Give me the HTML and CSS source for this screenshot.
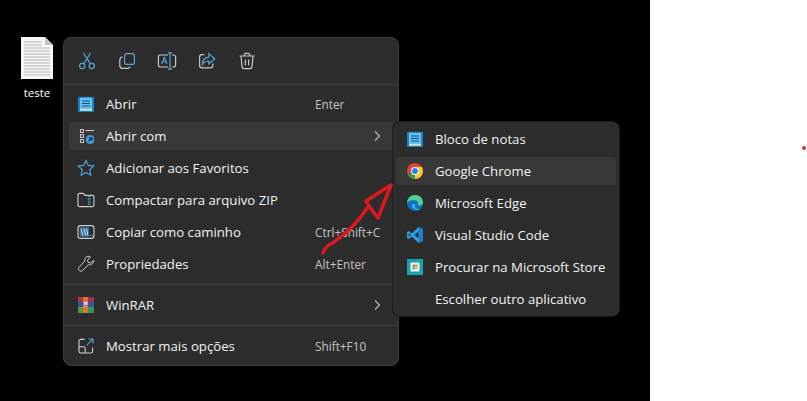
FILE: index.html
```html
<!DOCTYPE html>
<html>

<head>
    <meta charset="UTF-8">
    <title>Abrir com</title>
    <link rel="stylesheet" href="styles.css">
</head>

<body>
    <svg class="defs" width="0" height="0">
        <symbol id="notepad" viewBox="0 0 16 16">
            <rect x="0" y="1" width="16" height="15" fill="#1a80c6" />
            <rect x="2" y="1" width="12" height="14" fill="#62c0f2" />
            <rect x="2" y="13" width="12" height="1.4" fill="#f3e0a0" />
            <path d="M3 0v2M5 0v2M7 0v2M9 0v2M11 0v2M13 0v2" stroke="#14507e" stroke-width="1" />
            <path d="M4 5h8M4 7.5h8M4 10h8" stroke="#14507e" stroke-width="1" />
        </symbol>
    </svg>

    <div class="desktop">
        <!-- file on the desktop -->
        <div class="file">
            <svg width="32" height="42" viewBox="0 0 32 42">
                <path d="M0 0h24l8 8v34H0z" fill="#f7f7f7" />
                <path d="M24 0l8 8h-8z" fill="#c4c4c4" />
                <path d="M3 5h18M3 8h18M3 11h26M3 14h26M3 17h26M3 20h26M3 23h26M3 26h26M3 29h26M3 32h26M3 35h26M3 38h26"
                    stroke="#b5b5b5" stroke-width="1" />
            </svg>
            <span class="file-name">teste</span>
        </div>

        <!-- main context menu -->
        <div class="menu main-menu">
            <div class="toolbar">
                <div class="tool">
                    <svg width="18" height="18" viewBox="0 0 18 18" fill="none" stroke="#55a6d6" stroke-width="1.2">
                        <circle cx="4.2" cy="14" r="2.6" />
                        <circle cx="13.8" cy="14" r="2.6" />
                        <path d="M5.6 11.8L12.6 1M12.4 11.8L5.4 1" />
                    </svg>
                </div>
                <div class="tool">
                    <svg width="18" height="18" viewBox="0 0 18 18" fill="none" stroke-width="1.2">
                        <rect x="6.6" y="1.6" width="9.8" height="10.8" rx="2.2" stroke="#55a6d6" />
                        <path d="M4.4 4.8C2.6 5.4 1.8 6.4 1.8 8v5.4c0 2 1.2 3 3 3h4.6c1.4 0 2.4-.7 2.9-1.9" stroke="#c6c6c6" />
                    </svg>
                </div>
                <div class="tool">
                    <svg width="20" height="18" viewBox="0 0 20 18" fill="none" stroke-width="1.2">
                        <path d="M11 3H3.5C2.2 3 1.4 3.8 1.4 5v8c0 1.2.8 2 2.1 2H11" stroke="#c6c6c6" />
                        <path d="M15 3h1.500c1.300 0 2.100.8 2.100 2v8c0 1.200-.8 2-2.100 2H15" stroke="#c6c6c6" />
                        <path d="M11 .8h4M11 17.200h4M13 .8v16.400" stroke="#55a6d6" />
                        <path d="M4.600 12L7.400 5.600 10 12M5.600 10h3.600" stroke="#55a6d6" />
                    </svg>
                </div>
                <div class="tool">
                    <svg width="18" height="18" viewBox="0 0 18 18" fill="none" stroke-width="1.2">
                        <path d="M6.400 2.600H4C2.500 2.600 1.600 3.500 1.600 5v8.400c0 1.500.9 2.400 2.400 2.400h8.400c1.500 0 2.400-.9 2.400-2.400v-2" stroke="#c6c6c6" />
                        <path d="M10.800 1.600l6 5.200-6 5.200V9c-3 0-5 1.100-6.400 3.400 0-4.400 2.400-6.800 6.400-7.200z" stroke="#55a6d6" />
                    </svg>
                </div>
                <div class="tool">
                    <svg width="18" height="18" viewBox="0 0 18 18" fill="none" stroke="#c6c6c6" stroke-width="1.2">
                        <path d="M1.600 4h14.800M6.400 4V2.800c0-.9.5-1.400 1.400-1.400h2.400c.9 0 1.400.5 1.400 1.400V4" />
                        <path d="M3 4l1 10.600c.1 1.300.9 2 2.200 2h5.600c1.300 0 2.100-.7 2.200-2L15 4" />
                        <path d="M7.400 7.600v5.600M10.600 7.600v5.600" />
                    </svg>
                </div>
            </div>
            <div class="sep"></div>
            <div class="group group-first">
                <div class="row">
                    <span class="icon"><svg width="16" height="16"><use href="#notepad" /></svg></span>
                    <span class="label">Abrir</span>
                    <span class="keys">Enter</span>
                </div>
                <div class="row row-hover">
                    <span class="icon">
                        <svg width="16" height="16" viewBox="0 0 16 16" fill="none">
                            <path d="M2.500 1.500h3v3h-3zM2.500 6.500h3v3h-3zM2.500 11.500h3v3h-3z" stroke="#d0d0d0" stroke-width="1" />
                            <path d="M7.500 2.500h8.500" stroke="#d0d0d0" stroke-width="1" />
                            <circle cx="12.200" cy="11.500" r="4.500" fill="#3a9ee0" />
                            <path d="M10.500 13.200l3.200-3.200M11 9.800h2.900v2.900" stroke="#14202a" stroke-width="1.100" />
                        </svg>
                    </span>
                    <span class="label">Abrir com</span>
                    <svg class="chevron" width="8" height="12" viewBox="0 0 8 12" fill="none" stroke="#bdbdbd" stroke-width="1.1">
                        <path d="M2 1.500L6.500 6 2 10.500" />
                    </svg>
                </div>
                <div class="row">
                    <span class="icon">
                        <svg width="18" height="18" viewBox="0 0 18 18" fill="none" stroke="#4da3d4" stroke-width="1.2">
                            <path d="M9 1.400l2.300 5 5.400.6-4 3.700 1.100 5.400L9 13.400l-4.800 2.700 1.100-5.400-4-3.700 5.400-.6z" />
                        </svg>
                    </span>
                    <span class="label">Adicionar aos Favoritos</span>
                </div>
                <div class="row">
                    <span class="icon">
                        <svg width="18" height="16" viewBox="0 0 18 16" fill="none" stroke-width="1.1">
                            <path d="M1 13V3c0-1 .6-1.600 1.600-1.600h3.600l1.800 2h7.400c1 0 1.600.6 1.600 1.600v8c0 1-.6 1.600-1.600 1.600H2.600C1.600 14.600 1 14 1 13z" stroke="#d0d0d0" />
                            <path d="M11.400 3.600v10.800M13 3.600v10.800" stroke="#4da3d4" stroke-dasharray="1.6 1" />
                        </svg>
                    </span>
                    <span class="label">Compactar para arquivo ZIP</span>
                </div>
                <div class="row">
                    <span class="icon">
                        <svg width="18" height="16" viewBox="0 0 18 16" fill="none">
                            <rect x="1" y="1.600" width="16" height="12.800" rx="2.400" stroke="#d0d0d0" stroke-width="1.1" />
                            <rect x="2.600" y="3.200" width="9.400" height="9.600" rx="1" fill="#2f6f9c" />
                            <path d="M4.200 4.600l1.600 7M7 4.600l1.600 7M9.600 4.600l1.200 7" stroke="#cfe6f5" stroke-width="1" />
                            <path d="M13 11.600h.9M15 11.600h.9" stroke="#d0d0d0" stroke-width="1" />
                        </svg>
                    </span>
                    <span class="label">Copiar como caminho</span>
                    <span class="keys">Ctrl+Shift+C</span>
                </div>
                <div class="row">
                    <span class="icon">
                        <svg width="18" height="18" viewBox="0 0 18 18" fill="none" stroke="#cfcfcf" stroke-width="1">
                            <path d="M12 1.200c-2.700 0-4.800 2.300-4.300 5L1.900 12.400c-1.900 2 1.500 5.200 3.500 3.300l6-6c2.800.7 5.500-1.400 5.400-4.400l-3.100 2.700-2.600-.6-.6-2.400 3-2.800c-.5-.3-1-.5-1.500-.5z" />
                        </svg>
                    </span>
                    <span class="label">Propriedades</span>
                    <span class="keys">Alt+Enter</span>
                </div>
            </div>
            <div class="sep"></div>
            <div class="group">
                <div class="row">
                    <span class="icon">
                        <svg width="16" height="16" viewBox="0 0 16 16">
                            <rect y="0" width="5" height="5" fill="#b0304a" />
                            <rect x="5" y="0" width="5" height="5" fill="#d9772a" />
                            <rect x="10" y="0" width="6" height="5" fill="#a62a52" />
                            <rect y="5" width="5" height="5" fill="#3a4fa8" />
                            <rect x="5" y="5" width="5" height="5" fill="#f0ece4" />
                            <rect x="10" y="5" width="6" height="5" fill="#3553b0" />
                            <rect y="10" width="5" height="6" fill="#4f9a3a" />
                            <rect x="5" y="10" width="5" height="6" fill="#d9772a" />
                            <rect x="10" y="10" width="6" height="6" fill="#2f9a58" />
                            <path d="M6 5.400v3.400h4V5.400" fill="none" stroke="#b0304a" stroke-width="1.2" />
                        </svg>
                    </span>
                    <span class="label">WinRAR</span>
                    <svg class="chevron" width="8" height="12" viewBox="0 0 8 12" fill="none" stroke="#bdbdbd" stroke-width="1.1">
                        <path d="M2 1.500L6.500 6 2 10.500" />
                    </svg>
                </div>
            </div>
            <div class="sep"></div>
            <div class="group">
                <div class="row">
                    <span class="icon">
                        <svg width="16" height="16" viewBox="0 0 16 16" fill="none" stroke-width="1.1">
                            <path d="M6.600 1.400H2.800C1.600 1.400 1 2 1 3.200v10c0 1.200.6 1.800 1.800 1.800h10c1.200 0 1.800-.6 1.800-1.800V9.400" stroke="#d0d0d0" />
                            <path d="M1 8.800h4.600c1 0 1.600.6 1.600 1.600V15" stroke="#d0d0d0" />
                            <path d="M8.600 7.400L15 1M10.400 1H15v4.600" stroke="#4da3d4" />
                        </svg>
                    </span>
                    <span class="label">Mostrar mais opções</span>
                    <span class="keys">Shift+F10</span>
                </div>
            </div>
        </div>

        <!-- submenu -->
        <div class="menu sub-menu">
            <div class="row">
                <span class="icon"><svg width="16" height="16"><use href="#notepad" /></svg></span>
                <span class="label">Bloco de notas</span>
            </div>
            <div class="row row-hover">
                <span class="icon">
                    <svg width="16" height="16" viewBox="0 0 16 16">
                        <circle cx="8" cy="8" r="8" fill="#de4437" />
                        <path d="M8 8L1.100 12A8 8 0 0 0 8 16c.5 0 1 0 1.400-.1L12 8z" fill="#2f9e4f" />
                        <path d="M8 4h6.900A8 8 0 0 1 8 16z" fill="#fbc52d" />
                        <circle cx="8" cy="8" r="4" fill="#fff" />
                        <circle cx="8" cy="8" r="3" fill="#2f80ed" />
                    </svg>
                </span>
                <span class="label">Google Chrome</span>
            </div>
            <div class="row">
                <span class="icon">
                    <svg width="16" height="16" viewBox="0 0 16 16">
                        <circle cx="8" cy="8" r="8" fill="#0f6fc4" />
                        <path d="M0 7.400C.6 3 4 0 8 0c4.400 0 8 3 8 7.600 0 1.800-1.400 2.800-3 2.800-1.200 0-2-.4-2.200-1 1-1.800-.6-4.200-3.400-4.200C4.800 5.200 1.800 5.400 0 7.400z" fill="#4fd08e" />
                        <path d="M5 10c0 2.600 2.400 5 5.200 5 1.600 0 3.200-.7 4-1.800-1.600.9-3 1-4.400.6C8 13.200 8 11 8 9.400 6.800 8.600 5 8.800 5 10z" fill="#2fb6e8" />
                    </svg>
                </span>
                <span class="label">Microsoft Edge</span>
            </div>
            <div class="row">
                <span class="icon">
                    <svg width="16" height="16" viewBox="0 0 16 16">
                        <path d="M11.600 0L16 2v12l-4.400 2L4.800 9.600 1.800 12 0 11V5l1.800-1 3 2.400z" fill="#2f9fe4" />
                        <path d="M11.600 4.600L7.400 8l4.200 3.400zM1.800 6v4l2-2z" fill="#1e2a36" />
                        <path d="M11.600 0L16 2v12l-4.400 2z" fill="#1a7fcb" />
                    </svg>
                </span>
                <span class="label">Visual Studio Code</span>
            </div>
            <div class="row">
                <span class="icon">
                    <svg width="16" height="16" viewBox="0 0 16 16">
                        <rect width="16" height="16" fill="#17a3ad" />
                        <rect x="3.500" y="3.500" width="9" height="9" rx="1" fill="#f2f2f2" />
                        <rect x="5.600" y="5.600" width="2.200" height="2.200" fill="#e2553d" />
                        <rect x="8.200" y="5.600" width="2.200" height="2.200" fill="#7cb83a" />
                        <rect x="5.600" y="8.200" width="2.200" height="2.200" fill="#2f9fe4" />
                        <rect x="8.200" y="8.200" width="2.200" height="2.200" fill="#f0b429" />
                    </svg>
                </span>
                <span class="label">Procurar na Microsoft Store</span>
            </div>
            <div class="row">
                <span class="icon"></span>
                <span class="label">Escolher outro aplicativo</span>
            </div>
        </div>

        <!-- red arrow drawn over the screenshot -->
        <svg class="arrow" width="90" height="90" viewBox="0 0 90 90" fill="none" stroke="#dc1820" stroke-width="3.500"
            stroke-linecap="round" stroke-linejoin="round">
            <path d="M13 83c1-5 5-8 11-11 12-8 24-20 34-35" />
            <path d="M56 31L81 15 68 48 59 36z" />
        </svg>
    </div>

    <div class="blank">
        <span class="dot"></span>
    </div>
</body>

</html>
```

FILE: styles.css
```css
body {
    margin: 0;
    display: flex;
    height: 401px;
    overflow: hidden;
    font-family: "Open Sans", sans-serif;
    background-color: #FFFFFF;
}

.defs {
    position: absolute;
}

.desktop {
    position: relative;
    width: 650px;
    height: 401px;
    background-color: #000000;
}

.blank {
    position: relative;
    flex: 1;
}

.dot {
    position: absolute;
    left: 152px;
    top: 146px;
    width: 4px;
    height: 4px;
    border-radius: 50%;
    background-color: #dc2a30;
}

.file {
    position: absolute;
    left: 5px;
    top: 37px;
    width: 64px;
    display: flex;
    flex-direction: column;
    align-items: center;
}

.file-name {
    margin-top: 6px;
    color: #FFFFFF;
    font-size: 11.5px;
    line-height: 16px;
}

.menu {
    position: absolute;
    box-sizing: border-box;
    background-color: #2c2c2c;
    border: 1px solid #3c3c3c;
    border-radius: 8px;
    color: #f2f2f2;
}

.main-menu {
    left: 63px;
    top: 37px;
    width: 336px;
    height: 329px;
}

.sub-menu {
    left: 392px;
    top: 121px;
    width: 228px;
    height: 196px;
    padding: 3px 0;
    border-color: #1c1c1c;
    display: flex;
    flex-direction: column;
    gap: 4px;
}

.toolbar {
    display: flex;
    height: 46px;
    padding-left: 3px;
}

.tool {
    width: 40px;
    display: flex;
    align-items: center;
    justify-content: center;
}

.sep {
    height: 1px;
    background-color: #404040;
}

.group {
    display: flex;
    flex-direction: column;
    gap: 4px;
    padding: 6px 0;
}

.group-first {
    padding-top: 5px;
}

.row {
    display: flex;
    align-items: center;
    flex-shrink: 0;
    height: 28px;
    margin: 0 5px;
    border-radius: 4px;
    font-size: 13.2px;
}

.sub-menu .row {
    margin: 0 3px;
}

.row-hover {
    background-color: #383838;
}

.icon {
    width: 20px;
    height: 20px;
    margin-left: 7px;
    margin-right: 10px;
    display: flex;
    align-items: center;
    justify-content: center;
}

.sub-menu .icon {
    margin-left: 9px;
}

.label {
    flex: 1;
    white-space: nowrap;
}

.keys {
    width: 78px;
    color: #c4c4c4;
    font-size: 11.8px;
    white-space: nowrap;
}

.chevron {
    margin-right: 12px;
}

.arrow {
    position: absolute;
    left: 310px;
    top: 170px;
}
```
